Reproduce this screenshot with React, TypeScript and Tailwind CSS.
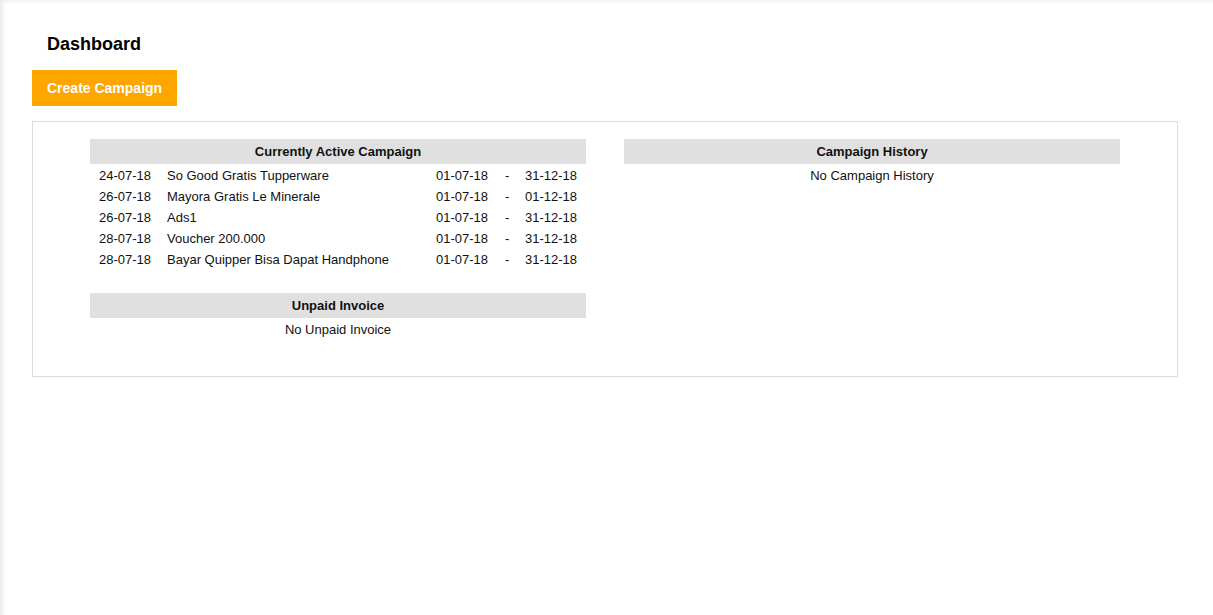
import React from "react";

const rows = [
  ["24-07-18", "So Good Gratis Tupperware", "01-07-18", "31-12-18"],
  ["26-07-18", "Mayora Gratis Le Minerale", "01-07-18", "01-12-18"],
  ["26-07-18", "Ads1", "01-07-18", "31-12-18"],
  ["28-07-18", "Voucher 200.000", "01-07-18", "31-12-18"],
  ["28-07-18", "Bayar Quipper Bisa Dapat Handphone", "01-07-18", "31-12-18"],
];

function Header({ children }: { children: React.ReactNode }) {
  return (
    <div className="h-[25px] bg-[#e0e0e0] flex items-center justify-center font-bold text-[13px] text-[#111]">
      {children}
    </div>
  );
}

export default function App() {
  return (
    <div
      className="w-[1213px] h-[615px] bg-white text-black overflow-hidden shadow-[inset_5px_3px_4px_-2px_rgba(0,0,0,0.08)]"
      style={{ fontFamily: '"Liberation Sans", Arial, sans-serif' }}
    >
      <div className="pl-[32px] pr-[35px] pt-[33px]">
        <h1 className="pl-[15px] text-[18px] font-bold leading-[22px]">Dashboard</h1>
        <button className="mt-[15px] h-[36px] px-[15px] bg-[#ffa500] text-white font-bold text-[14px] block">
          Create Campaign
        </button>
        <div className="mt-[15px] border border-[#dddddd] pt-[17px] pb-[37px] px-[57px] flex gap-[38px] shadow-[0_1px_2px_rgba(0,0,0,0.03)]">
          <div className="w-[496px] text-[13px] text-[#111]">
            <Header>Currently Active Campaign</Header>
            <div>
              {rows.map((r, i) => (
                <div
                  key={i}
                  className="grid grid-cols-[68px_269px_69px_20px_52px] px-[9px] h-[21px] pt-[2px] items-center whitespace-nowrap"
                >
                  <span>{r[0]}</span>
                  <span>{r[1]}</span>
                  <span>{r[2]}</span>
                  <span>-</span>
                  <span>{r[3]}</span>
                </div>
              ))}
            </div>
            <div className="mt-[24px]">
              <Header>Unpaid Invoice</Header>
              <div className="h-[21px] pt-[2px] flex items-center justify-center">No Unpaid Invoice</div>
            </div>
          </div>
          <div className="w-[496px] text-[13px] text-[#111]">
            <Header>Campaign History</Header>
            <div className="h-[21px] pt-[2px] flex items-center justify-center">No Campaign History</div>
          </div>
        </div>
      </div>
    </div>
  );
}
